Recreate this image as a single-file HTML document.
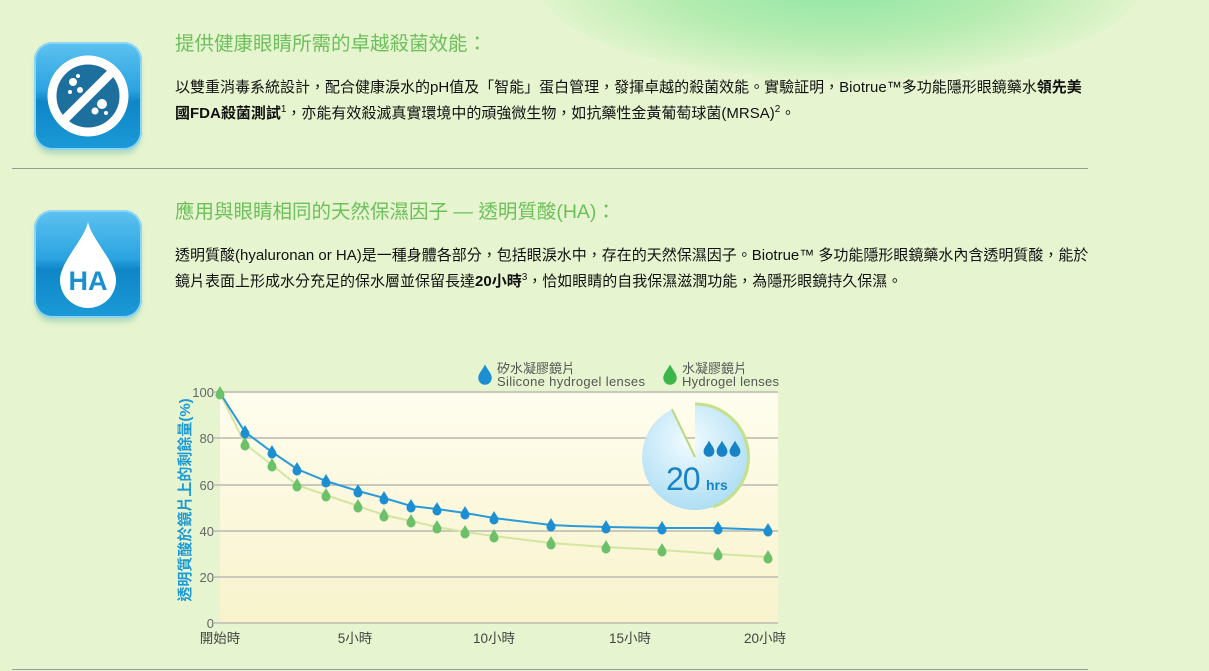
<!DOCTYPE html>
<html><head><meta charset="utf-8">
<style>
html,body{margin:0;padding:0;}
body{width:1209px;height:671px;overflow:hidden;position:relative;
background:#e6f5cf;
font-family:"Liberation Sans","Noto Sans CJK TC",sans-serif;}
.glow{position:absolute;left:540px;top:-110px;width:600px;height:190px;border-radius:50%;
background:radial-gradient(ellipse at center,#8fe6a6 0%,#b5ecb0 40%,rgba(220,244,200,0) 75%);}
.h{position:absolute;left:175px;font-size:19.5px;color:#6cbf5a;white-space:nowrap;}
.p{position:absolute;left:175px;font-size:15px;line-height:26px;color:#111;white-space:nowrap;}
.p sup{font-size:10px;line-height:0;}
.hr{position:absolute;left:12px;width:1076px;height:1px;background:#9a9a9a;}
.icon{position:absolute;left:34px;width:108px;height:108px;border-radius:18px;
background:linear-gradient(#5ec3f0 0%,#2aa3e0 45%,#0f86c6 55%,#1c9ad8 100%);
box-shadow:0 0 0 2px #8fd4f2 inset, 0 6px 6px -2px rgba(120,190,170,.5);}
</style></head><body>
<div class="glow"></div>

<div class="icon" style="top:42px">
<svg width="108" height="108" viewBox="0 0 108 108">
<circle cx="54" cy="54" r="36" fill="#1d6f9e"/>
<circle cx="54" cy="54" r="36" fill="none" stroke="#fff" stroke-width="9"/>
<circle cx="39" cy="40" r="4" fill="#fff"/><circle cx="46" cy="48" r="3" fill="#fff"/><circle cx="36" cy="50" r="2" fill="#fff"/><circle cx="44" cy="34" r="2" fill="#fff"/>
<circle cx="68" cy="62" r="5" fill="#fff"/><circle cx="61" cy="69" r="3.5" fill="#fff"/><circle cx="72" cy="71" r="2" fill="#fff"/>
<line x1="78" y1="30" x2="30" y2="78" stroke="#fff" stroke-width="9"/>
</svg></div>

<div class="icon" style="top:210px">
<svg width="108" height="108" viewBox="0 0 108 108">
<path d="M54 12 C58 30 82 52 82 70 A28 28 0 0 1 26 70 C26 52 50 30 54 12Z" fill="#fff"/>
<text x="54" y="80" text-anchor="middle" font-family="Liberation Sans" font-weight="bold" font-size="27" fill="#1b8fd0">HA</text>
</svg></div>

<div class="h" style="top:27px">提供健康眼睛所需的卓越殺菌效能：</div>
<div class="p" style="top:75px">以雙重消毒系統設計，配合健康淚水的pH值及「智能」蛋白管理，發揮卓越的殺菌效能。實驗証明，Biotrue™多功能隱形眼鏡藥水<b>領先美</b><br><b>國FDA殺菌測試</b><sup>1</sup>，亦能有效殺滅真實環境中的頑強微生物，如抗藥性金黃葡萄球菌(MRSA)<sup>2</sup>。</div>
<div class="hr" style="top:168px"></div>

<div class="h" style="top:195px">應用與眼睛相同的天然保濕因子 — 透明質酸(HA)：</div>
<div class="p" style="top:243px">透明質酸(hyaluronan or HA)是一種身體各部分，包括眼淚水中，存在的天然保濕因子。Biotrue™ 多功能隱形眼鏡藥水內含透明質酸，能於<br>鏡片表面上形成水分充足的保水層並保留長達<b>20小時</b><sup>3</sup>，恰如眼睛的自我保濕滋潤功能，為隱形眼鏡持久保濕。</div>

<svg style="position:absolute;left:0;top:0" width="1209" height="671">
<defs>
<linearGradient id="pa" x1="0" y1="0" x2="0" y2="1"><stop offset="0" stop-color="#fffdee"/><stop offset="1" stop-color="#f8f3cc"/></linearGradient>
<radialGradient id="pie" cx="0.45" cy="0.35" r="0.7"><stop offset="0" stop-color="#f2fbff"/><stop offset="1" stop-color="#a9dcf3"/></radialGradient>
<path id="d" d="M0 -7 C2 -3 4.5 -1 4.5 2 A4.5 4.5 0 0 1 -4.5 2 C-4.5 -1 -2 -3 0 -7Z"/>
</defs>
<rect x="220" y="392" width="558" height="231" fill="url(#pa)"/>
<g stroke="#c9c8bd" stroke-width="2">
<line x1="214" y1="392" x2="778" y2="392"/><line x1="214" y1="438" x2="778" y2="438"/>
<line x1="214" y1="485" x2="778" y2="485"/><line x1="214" y1="531" x2="778" y2="531"/>
<line x1="214" y1="577" x2="778" y2="577"/><line x1="214" y1="623" x2="778" y2="623"/>
</g>
<g font-size="13" fill="#666" text-anchor="end" font-family="Liberation Sans">
<text x="214" y="397">100</text><text x="214" y="443">80</text><text x="214" y="490">60</text>
<text x="214" y="536">40</text><text x="214" y="582">20</text><text x="214" y="628">0</text>
</g>
<g font-size="13.5" fill="#444" text-anchor="middle" font-family="Liberation Sans,Noto Sans CJK TC,sans-serif">
<text x="220" y="643">開始時</text><text x="355" y="643">5小時</text><text x="494" y="643">10小時</text><text x="630" y="643">15小時</text><text x="765" y="643">20小時</text>
</g>
<text transform="translate(190,500) rotate(-90)" text-anchor="middle" font-size="15" font-weight="bold" fill="#1d9ad6" font-family="Liberation Sans,Noto Sans CJK TC,sans-serif">透明質酸於鏡片上的剩餘量(%)</text>

<g transform="translate(695,457)">
<path d="M0 0 L0 -53 A53 53 0 1 1 -23 -47.7 Z" fill="url(#pie)"/>
<path d="M0 -53 A53 53 0 0 1 18 50" fill="none" stroke="#c5e08a" stroke-width="3"/>
<line x1="0" y1="0" x2="-23" y2="-47.7" stroke="#b8d880" stroke-width="2"/>
<g fill="#1783c6"><use href="#d" transform="translate(14,-8) scale(1.2)"/><use href="#d" transform="translate(27,-8) scale(1.2)"/><use href="#d" transform="translate(40,-8) scale(1.2)"/></g>
<text x="-29" y="33" font-size="32" fill="#1783c6" font-family="Liberation Sans" letter-spacing="-1">20</text>
<text x="11" y="33" font-size="14" font-weight="bold" fill="#1783c6" font-family="Liberation Sans">hrs</text>
</g>

<polyline fill="none" stroke="#d2e6a0" stroke-width="2" points="220,393 245,444 272,465 297,485 326,495 358,506 384,515 411,521 437,527 465,532 494,536 551,543 606,547 662,550 718,554 768,557"/>
<polyline fill="none" stroke="#2a9ad8" stroke-width="2" points="220,393 245,432 272,452 297,469 326,481 358,491 384,498 411,506 437,509 465,513 494,518 551,525 572,526 606,527 662,528 718,528 768,530"/>
<g fill="#6cc06a">
<use href="#d" x="220" y="393"/><use href="#d" x="245" y="444"/><use href="#d" x="272" y="465"/><use href="#d" x="297" y="485"/><use href="#d" x="326" y="495"/><use href="#d" x="358" y="506"/><use href="#d" x="384" y="515"/><use href="#d" x="411" y="521"/><use href="#d" x="437" y="527"/><use href="#d" x="465" y="532"/><use href="#d" x="494" y="536"/><use href="#d" x="551" y="543"/><use href="#d" x="606" y="547"/><use href="#d" x="662" y="550"/><use href="#d" x="718" y="554"/><use href="#d" x="768" y="557"/>
</g>
<g fill="#1c8fd2">
<use href="#d" x="245" y="432"/><use href="#d" x="272" y="452"/><use href="#d" x="297" y="469"/><use href="#d" x="326" y="481"/><use href="#d" x="358" y="491"/><use href="#d" x="384" y="498"/><use href="#d" x="411" y="506"/><use href="#d" x="437" y="509"/><use href="#d" x="465" y="513"/><use href="#d" x="494" y="518"/><use href="#d" x="551" y="525"/><use href="#d" x="606" y="527"/><use href="#d" x="662" y="528"/><use href="#d" x="718" y="528"/><use href="#d" x="768" y="530"/>
</g>

<use href="#d" transform="translate(485,375) scale(1.5)" fill="#1c8fd2"/>
<use href="#d" transform="translate(670,375) scale(1.5)" fill="#3cb54a"/>
<g font-size="13" fill="#555" font-family="Liberation Sans,Noto Sans CJK TC,sans-serif">
<text x="497" y="373">矽水凝膠鏡片</text><text x="497" y="386" textLength="148">Silicone hydrogel lenses</text>
<text x="682" y="373">水凝膠鏡片</text><text x="682" y="386" textLength="97">Hydrogel lenses</text>
</g>
</svg>

<div class="hr" style="top:669px"></div>
</body></html>
